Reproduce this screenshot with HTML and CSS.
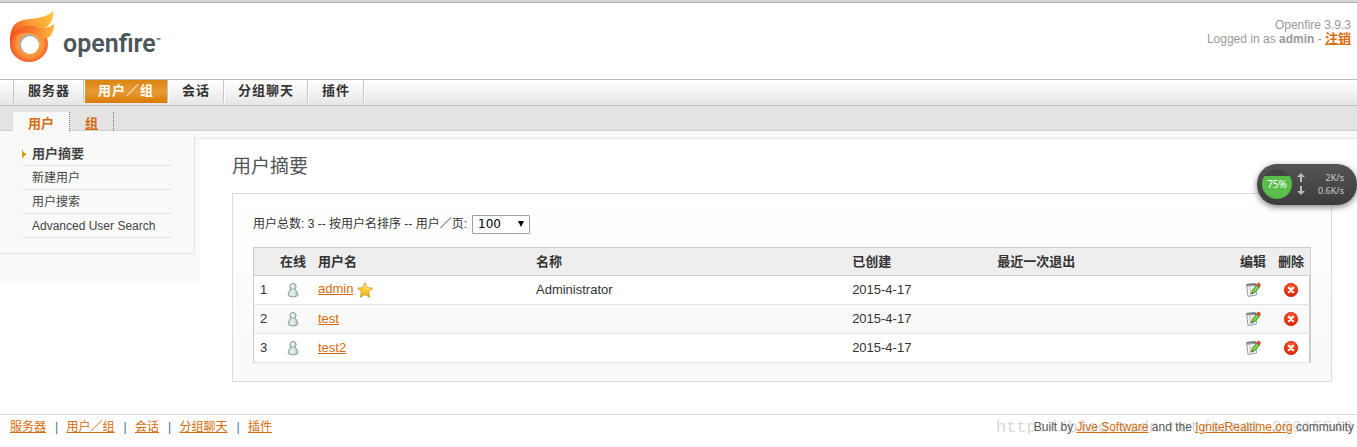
FILE: index.html
```html
<!DOCTYPE html>
<html lang="zh-CN">
<head>
    <meta charset="UTF-8">
    <meta name="viewport" content="width=device-width, initial-scale=1.0">
    <title>用户摘要</title>
    <link rel="stylesheet" href="styles.css">
</head>
<body>

    <!-- shared icons -->
    <svg class="sprite" aria-hidden="true">
        <defs>
            <linearGradient id="pawn-fill" x1="0" y1="0" x2="1" y2="0">
                <stop offset="0" stop-color="#b5c6c4"/>
                <stop offset="0.5" stop-color="#e6f6f5"/>
                <stop offset="1" stop-color="#a9b8b6"/>
            </linearGradient>
            <radialGradient id="delete-fill" cx="0.5" cy="0.3" r="0.7">
                <stop offset="0" stop-color="#ff6a45"/>
                <stop offset="0.6" stop-color="#f5330c"/>
                <stop offset="1" stop-color="#d42500"/>
            </radialGradient>
            <linearGradient id="star-fill" x1="0" y1="0" x2="0" y2="1">
                <stop offset="0" stop-color="#ffe468"/>
                <stop offset="1" stop-color="#f3b30c"/>
            </linearGradient>
        </defs>
        <symbol id="pawn" viewBox="0 0 16 16">
            <path d="M8 1.5a3 3 0 0 0-2.6 4.6c.4.7.2 1.2-.3 2C4.2 9.5 3.2 11 3.2 12.800c0 1.300 2 2 4.800 2s4.800-.7 4.800-2c0-1.800-1-3.300-1.900-4.700-.5-.8-.7-1.300-.3-2A3 3 0 0 0 8 1.500z" fill="url(#pawn-fill)" stroke="#8b9796"/>
            <path d="M5.500 6.500c1.500 1 3.500 1 5 0" fill="none" stroke="#97a5a4"/>
            <path d="M7 3.500v1M6 10l-1 2.500" stroke="#fff"/>
        </symbol>
        <symbol id="edit" viewBox="0 0 16 16">
            <path d="M1.500 2.500l9-.500 1 11-8.500 1.500z" fill="#f8fafc" stroke="#8d9bb5"/>
            <path d="M1.500 2l9-.8.5 2.800-9 .6z" fill="#6c7077"/>
            <path d="M3 3v1M5 3v1M7 3v1M9 3v1" stroke="#ddd"/>
            <path d="M5 5.500l.5 8" stroke="#e48070" stroke-width=".8"/>
            <path d="M7 6.500h3M7 8.500h2" stroke="#c5cbe0" stroke-width=".7"/>
            <path d="M6.500 12l.8-3.700 4.500-5.300 2.700 2.200-4.700 5.500z" fill="#5fc735" stroke="#34871b" stroke-width=".7"/>
            <path d="M8.500 9.500l4.500-5.300" stroke="#a4ee7a"/>
            <path d="M11.300 3l1.400-1.800c1.200-.8 3.200.8 2.600 2.200L14.200 5.200z" fill="#e84a30" stroke="#b82c18" stroke-width=".5"/>
            <path d="M6.500 12l.4-1.700 1.100.9z" fill="#333"/>
        </symbol>
        <symbol id="delete" viewBox="0 0 16 16">
            <circle cx="8" cy="8" r="6.700" fill="url(#delete-fill)" stroke="#b92b12" stroke-width=".7"/>
            <path d="M5.800 5.800l4.400 4.400M10.200 5.800l-4.400 4.400" stroke="#fff" stroke-width="2.200" stroke-linecap="round"/>
        </symbol>
        <symbol id="star" viewBox="0 0 16 16">
            <path d="M8 .7l2.200 5 5.300.5-4 3.600 1.200 5.400L8 12.400l-4.700 2.800 1.200-5.400-4-3.600 5.300-.5z" fill="url(#star-fill)" stroke="#d59a12" stroke-width=".9" stroke-linejoin="round"/>
            <path d="M8 3l1.300 3.600 3.300.3" fill="none" stroke="#fff3a5" stroke-width=".8"/>
        </symbol>
    </svg>

    <header class="header">
        <a class="logo" href="#" aria-label="openfire">
            <svg class="logo-mark" viewBox="0 0 46 52" aria-hidden="true">
                <defs>
                    <radialGradient id="ring" gradientUnits="userSpaceOnUse" cx="20" cy="33" r="20">
                        <stop offset="0.450" stop-color="#fda545"/>
                        <stop offset="0.700" stop-color="#fb8a38"/>
                        <stop offset="1" stop-color="#f04e23"/>
                    </radialGradient>
                    <linearGradient id="flame-back" x1="0" y1="0.700" x2="1" y2="0.200">
                        <stop offset="0" stop-color="#f4511e"/>
                        <stop offset="0.500" stop-color="#fb9a34"/>
                        <stop offset="1" stop-color="#ffc63a"/>
                    </linearGradient>
                    <linearGradient id="flame-front" gradientUnits="userSpaceOnUse" x1="2" y1="18" x2="44" y2="22">
                        <stop offset="0" stop-color="#f4511e"/>
                        <stop offset="0.450" stop-color="#f9762c"/>
                        <stop offset="1" stop-color="#ffb83a"/>
                    </linearGradient>
                </defs>
                <path d="M0 31C0 13 7 9 20 8C31 7 38 5 43 0C44 8 41 14 33 18L20 24z" fill="url(#flame-back)"/>
                <ellipse cx="19" cy="33" rx="19" ry="18" fill="url(#ring)"/>
                <path d="M2 25C8 16 17 15 26 17C34 18 39 17 44 13C44 22 40 28 33 28C31 28 30 27 29 26C25 21 12 20 2 25z" fill="url(#flame-front)"/>
                <circle cx="19" cy="33" r="10" fill="#aaa"/>
                <circle cx="20" cy="34" r="9" fill="#fff"/>
            </svg>
            <span class="logo-text">openfire<sup>™</sup></span>
        </a>
        <div class="userbox">
            <div>Openfire 3.9.3</div>
            <div>Logged in as <b>admin</b> - <a class="logout" href="#">注销</a></div>
        </div>
    </header>

    <nav class="tabs">
        <a href="#">服务器</a>
        <a class="active" href="#">用户／组</a>
        <a href="#">会话</a>
        <a href="#">分组聊天</a>
        <a href="#">插件</a>
    </nav>
    <nav class="subtabs">
        <a class="active" href="#">用户</a>
        <a href="#">组</a>
    </nav>

    <div class="page">
        <aside class="sidebar">
            <ul class="sidebar-menu">
                <li class="current"><a href="#">用户摘要</a></li>
                <li><a href="#">新建用户</a></li>
                <li><a href="#">用户搜索</a></li>
                <li><a href="#">Advanced User Search</a></li>
            </ul>
        </aside>

        <main class="content">
            <h1>用户摘要</h1>
            <div class="panel">
                <div class="summary">
                    <label for="page-size">用户总数: 3 -- 按用户名排序 -- 用户／页:</label>
                    <span class="select-wrap">
                        <select id="page-size">
                            <option>25</option>
                            <option>50</option>
                            <option selected>100</option>
                        </select>
                    </span>
                </div>
                <table class="users">
                    <colgroup>
                        <col class="col-num">
                        <col class="col-online">
                        <col class="col-user">
                        <col class="col-name">
                        <col class="col-created">
                        <col class="col-logout">
                        <col class="col-edit">
                        <col class="col-delete">
                    </colgroup>
                    <thead>
                        <tr>
                            <th></th>
                            <th class="center">在线</th>
                            <th>用户名</th>
                            <th>名称</th>
                            <th>已创建</th>
                            <th>最近一次退出</th>
                            <th class="center">编辑</th>
                            <th class="center">删除</th>
                        </tr>
                    </thead>
                    <tbody>
                        <tr>
                            <td>1</td>
                            <td class="center"><svg class="icon"><use href="#pawn"/></svg></td>
                            <td><a href="#">admin</a> <svg class="icon"><use href="#star"/></svg></td>
                            <td>Administrator</td>
                            <td>2015-4-17</td>
                            <td></td>
                            <td class="center"><a href="#" aria-label="编辑"><svg class="icon"><use href="#edit"/></svg></a></td>
                            <td class="center"><a href="#" aria-label="删除"><svg class="icon"><use href="#delete"/></svg></a></td>
                        </tr>
                        <tr>
                            <td>2</td>
                            <td class="center"><svg class="icon"><use href="#pawn"/></svg></td>
                            <td><a href="#">test</a></td>
                            <td></td>
                            <td>2015-4-17</td>
                            <td></td>
                            <td class="center"><a href="#" aria-label="编辑"><svg class="icon"><use href="#edit"/></svg></a></td>
                            <td class="center"><a href="#" aria-label="删除"><svg class="icon"><use href="#delete"/></svg></a></td>
                        </tr>
                        <tr>
                            <td>3</td>
                            <td class="center"><svg class="icon"><use href="#pawn"/></svg></td>
                            <td><a href="#">test2</a></td>
                            <td></td>
                            <td>2015-4-17</td>
                            <td></td>
                            <td class="center"><a href="#" aria-label="编辑"><svg class="icon"><use href="#edit"/></svg></a></td>
                            <td class="center"><a href="#" aria-label="删除"><svg class="icon"><use href="#delete"/></svg></a></td>
                        </tr>
                    </tbody>
                </table>
            </div>
        </main>
    </div>

    <footer class="footer">
        <div class="footer-nav">
            <a href="#">服务器</a><span>|</span>
            <a href="#">用户／组</a><span>|</span>
            <a href="#">会话</a><span>|</span>
            <a href="#">分组聊天</a><span>|</span>
            <a href="#">插件</a>
        </div>
        <div class="credits">Built by <a href="#">Jive Software</a> and the <a href="#">IgniteRealtime.org</a> community</div>
        <div class="watermark">http://blog.csdn.net/sinat_26915549</div>
    </footer>

    <!-- floating network monitor -->
    <div class="netmon">
        <div class="netmon-load">75%</div>
        <svg class="netmon-arrows" viewBox="0 0 8 22" aria-hidden="true">
            <path d="M4 0l4 4H5v5H3V4H0zM4 22l4-4H5v-5H3v5H0z" fill="#bbb"/>
        </svg>
        <div class="netmon-speed">
            <div>2K/s</div>
            <div>0.6K/s</div>
        </div>
    </div>

</body>
</html>
```
FILE: styles.css
```css
* {
    box-sizing: border-box;
}

body {
    margin: 0;
    font-family: "Liberation Sans", "Noto Sans CJK SC", sans-serif;
    font-size: 12px;
    line-height: 14px;
    color: #333;
    background-color: #fff;
}

a {
    color: #d76c0d;
}

.sprite {
    position: absolute;
    width: 0;
    height: 0;
}

.icon {
    display: inline-block;
    width: 16px;
    height: 16px;
    vertical-align: middle;
}

/* Header */
.header {
    display: flex;
    justify-content: space-between;
    height: 79px;
    border-top: 2px solid #d8d8d8;
    padding: 0 6px 0 10px;
    box-shadow: inset 0 1px #aaa;
}

.logo {
    display: flex;
    align-items: flex-start;
    gap: 7px;
    padding-top: 9px;
    text-decoration: none;
}

.logo-mark {
    width: 46px;
    height: 52px;
}

.logo-text {
    padding-top: 17px;
    font-family: Roboto, sans-serif;
    font-size: 25px;
    font-weight: 600;
    line-height: 32px;
    color: #4b575b;
}

.logo-text sup {
    font-size: 8px;
    line-height: 8px;
    vertical-align: 8px;
}

.userbox {
    padding-top: 16px;
    text-align: right;
    color: #999;
}

.logout {
    font-size: 13px;
    font-weight: bold;
}

/* Main tabs */
.tabs {
    display: flex;
    height: 27px;
    padding-left: 13px;
    border-top: 1px solid #bbb;
    border-bottom: 1px solid #c2c2c2;
    background: linear-gradient(#fff, #e6e6e6);
}

.tabs a {
    height: 23px;
    padding: 0 13px 0 14px;
    border-right: 1px solid #c6c6c6;
    box-shadow: 1px 0 #fff;
    font-size: 13px;
    font-weight: bold;
    letter-spacing: 1px;
    line-height: 21px;
    text-decoration: none;
    color: #333;
}

.tabs a:first-child {
    border-left: 1px solid #c6c6c6;
}

.tabs a.active {
    margin-left: 1px;
    padding: 0 13px;
    color: #fff;
    background: linear-gradient(#db8413, #e89a35 50%, #da7a03);
}

/* Second level tabs */
.subtabs {
    display: flex;
    height: 25px;
    padding: 6px 0 0 13px;
    background-color: #e3e3e3;
    box-shadow: inset 0 -1px #d0d0d0;
}

.subtabs a {
    padding: 0 15px;
    border-right: 1px dotted #777;
    font-size: 13px;
    font-weight: bold;
    line-height: 24px;
}

.subtabs a.active {
    text-decoration: none;
    background-color: #f9f9f9;
}

/* Page */
.page {
    display: flex;
    align-items: flex-start;
    padding-top: 3px;
    background: linear-gradient(#f9f9f9, #f9f9f9) 0 0 / 100% 7px no-repeat;
}

.sidebar {
    width: 200px;
    height: 147px;
    flex-shrink: 0;
    padding-right: 5px;
    background-color: #f9f9f9;
}

.sidebar-menu {
    height: 120px;
    margin: 0;
    padding: 8px 22px 0;
    border-right: 1px solid #e3e3e3;
    border-bottom: 1px solid #e3e3e3;
    list-style: none;
}

.sidebar-menu li {
    height: 24px;
    padding-left: 10px;
    border-bottom: 1px solid #e3e3e3;
    line-height: 24px;
}

.sidebar-menu a {
    text-decoration: none;
    color: #444;
}

.sidebar-menu .current {
    font-size: 13px;
    font-weight: bold;
    background: conic-gradient(from 225deg at 4px 50%, #d9a400 90deg, transparent 0) 0 50% / 4px 8px no-repeat;
}

.content {
    flex: 1;
    margin: 4px 0 0 -5px;
    padding: 16px 25px 32px 37px;
    border-top: 1px solid #e6e6e6;
    border-top-left-radius: 4px;
}

.content h1 {
    margin: 0;
    font-size: 19px;
    font-weight: normal;
    line-height: 24px;
    color: #555;
}

.panel {
    margin-top: 14px;
    padding: 20px 20px 18px;
    border: 1px solid #dcdcdc;
    background: linear-gradient(#fff, #f9f9f9);
}

.summary {
    display: flex;
    align-items: center;
    gap: 5px;
    height: 20px;
    margin-bottom: 13px;
}

.select-wrap {
    position: relative;
}

.select-wrap::after {
    content: "";
    position: absolute;
    top: 6px;
    right: 6px;
    border: 3px solid transparent;
    border-top: 6px solid #000;
    border-bottom: 0;
    pointer-events: none;
}

.select-wrap select {
    display: block;
    appearance: none;
    width: 58px;
    height: 19px;
    padding: 0 5px;
    border: 1px solid #a0a0a0;
    border-radius: 1px;
    font-family: "DejaVu Sans", sans-serif;
    font-size: 12px;
    line-height: 17px;
    color: #000;
    background-color: #fff;
}

/* User table */
.users {
    width: 100%;
    table-layout: fixed;
    border-collapse: separate;
    border-spacing: 0;
    border: 1px solid #ccc;
    border-bottom: 0;
    font-size: 13px;
}

.col-num { width: 20px; }
.col-online { width: 38px; }
.col-user { width: 218px; }
.col-created { width: 145px; }
.col-logout { width: 23%; }
.col-edit,
.col-delete { width: 38px; }

.users th {
    height: 28px;
    padding: 1px 6px 0;
    border-bottom: 1px solid #ccc;
    text-align: left;
    white-space: nowrap;
    background-color: #eee;
}

.users td {
    height: 29px;
    padding: 0 6px;
    border-bottom: 1px solid #e3e3e3;
    background-color: #fff;
}

.users tr:nth-child(even) td {
    background-color: #f9f9f9;
}

.users td:last-child {
    box-shadow: inset -1px 0 #ccc;
}

.users .center {
    padding-left: 0;
    padding-right: 0;
    text-align: center;
}

/* Footer */
.footer {
    position: relative;
    display: flex;
    justify-content: space-between;
    padding: 5px 3px 0 10px;
    border-top: 1px solid #ddd;
    color: #555;
}

.footer-nav span {
    margin: 0 5px 0 9px;
    color: #37739b;
}

.watermark {
    position: absolute;
    top: 1px;
    right: 4px;
    font-family: "Liberation Mono", monospace;
    font-size: 17px;
    line-height: 24px;
    color: rgba(120, 120, 120, 0.3);
    pointer-events: none;
}

/* Network monitor */
.netmon {
    position: absolute;
    top: 164px;
    right: 0;
    display: flex;
    align-items: center;
    width: 100px;
    height: 41px;
    padding: 0 13px 2px 5px;
    border-radius: 20px;
    background: linear-gradient(#555, #3c3c3c);
    box-shadow: 0 2px 6px rgba(0, 0, 0, 0.5);
    font-family: "Noto Sans", sans-serif;
    font-size: 9px;
    line-height: 13px;
    color: #ccc;
}

.netmon-load {
    width: 30px;
    height: 30px;
    border-radius: 50%;
    font-size: 10px;
    line-height: 30px;
    text-align: center;
    color: #fff;
    background: linear-gradient(#444 24%, #5abf4a 24%);
}

.netmon-arrows {
    width: 8px;
    height: 22px;
    margin-left: 5px;
}

.netmon-speed {
    flex: 1;
    text-align: right;
}
```
